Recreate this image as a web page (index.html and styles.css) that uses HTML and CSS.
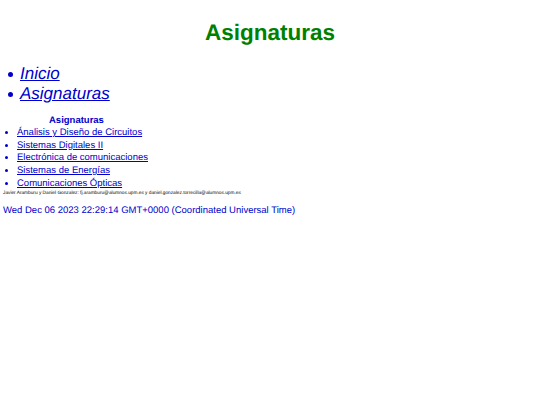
FILE: index.html
```html
<!DOCTYPE html>
<html lang="es">
<head>
    <meta charset="UTF-8">
    <title>Asignaturas</title>
    <link rel="stylesheet" href="styles.css">
</head>
<body>
    <h1 class="titulo">Asignaturas</h1>

    <!-- Menu principal -->
    <ul class="menu">
        <li><a href="#">Inicio</a></li>
        <li><a href="#">Asignaturas</a></li>
    </ul>

    <!-- Lista de asignaturas -->
    <div class="asignaturas">
        <h2 class="subtitulo">Asignaturas</h2>
        <ul class="lista">
            <li><a href="#">Ánalisis y Diseño de Circuitos</a></li>
            <li><a href="#">Sistemas Digitales II</a></li>
            <li><a href="#">Electrónica de comunicaciones</a></li>
            <li><a href="#">Sistemas de Energías</a></li>
            <li><a href="#">Comunicaciones Ópticas</a></li>
        </ul>
    </div>

    <p class="autores">Javier Aramburu y Daniel Gonzalez: fj.aramburu@alumnos.upm.es y daniel.gonzalez.torrecilla@alumnos.upm.es</p>
    <p class="fecha">Wed Dec 06 2023 22:29:14 GMT+0000 (Coordinated Universal Time)</p>
</body>
</html>
```

FILE: styles.css
```css
body {
    margin: 0;
    padding: 0 3px;
    font-family: "Liberation Sans", Arial, sans-serif;
    color: #0000cc;
    background-color: #ffffff;
    text-rendering: geometricPrecision;
}

a {
    color: #0000cc;
}

.titulo {
    margin: 0;
    padding-top: 19px;
    font-size: 22.5px;
    line-height: 28px;
    color: #008000;
    text-align: center;
}

.menu {
    margin: 17px 0 0;
    padding-left: 17px;
    font-size: 17px;
    line-height: 20px;
    font-style: italic;
    list-style: none;
}

/* vineta dibujada para que quede pegada al texto */
.menu li::before {
    content: "";
    display: inline-block;
    width: 5px;
    height: 5px;
    margin-left: -12px;
    margin-right: 7px;
    margin-bottom: 2px;
    border-radius: 50%;
    background-color: #0000cc;
}

.asignaturas {
    margin-top: 10px;
}

.subtitulo {
    margin: 0;
    padding-left: 46px;
    font-size: 9.5px;
    line-height: 13px;
}

.lista {
    margin: 0;
    padding-left: 14px;
    font-size: 9.5px;
    line-height: 12.7px;
}

.autores {
    margin: 0;
    font-size: 4.75px;
    line-height: 6px;
    color: #000000;
}

.fecha {
    margin: 8px 0 0;
    font-size: 9.5px;
    line-height: 12px;
}
```
